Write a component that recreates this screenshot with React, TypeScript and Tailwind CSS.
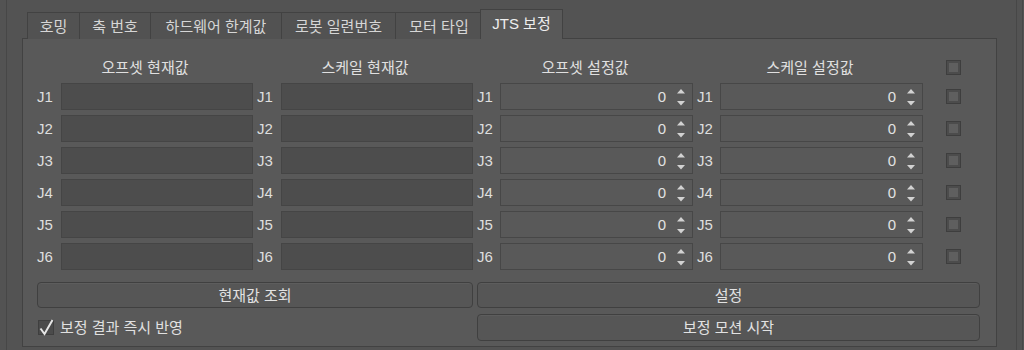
import React from "react";

const tabs = [
  { label: "호밍", w: "w-[53px]" },
  { label: "축 번호", w: "w-[72px]" },
  { label: "하드웨어 한계값", w: "w-[132px]" },
  { label: "로봇 일련번호", w: "w-[115px]" },
  { label: "모터 타입", w: "w-[88px]" },
];

const joints = ["J1", "J2", "J3", "J4", "J5", "J6"];

const SpinArrows = () => (
  <svg width="8" height="27" viewBox="0 0 8 27" className="ml-[11px] mr-[7px] shrink-0">
    <path d="M0 10.5 L4 6 L8 10.5 Z" fill="#d2d2d2" />
    <path d="M0 18 L4 22.5 L8 18 Z" fill="#d2d2d2" />
  </svg>
);

const ReadField = () => (
  <div className="w-[192px] h-[27px] bg-[#4d4d4d] border border-[#454545] shrink-0" />
);

const SpinBox = ({ width }: { width: string }) => (
  <div
    className={`${width} h-[27px] bg-[#595959] border border-[#474747] flex items-center justify-end shrink-0`}
  >
    <span className="text-[#e2e2e2]">0</span>
    <SpinArrows />
  </div>
);

const Check = () => (
  <div className="w-[15px] h-[15px] border border-[#3e3e3e] bg-[#5f5f5f] shadow-[inset_0_0_0_2px_#4c4c4c] shrink-0" />
);

const Label = ({ text, w }: { text: string; w: string }) => (
  <div className={`${w} shrink-0 text-[#dedede]`}>{text}</div>
);

export default function App() {
  return (
    <div className="w-[1024px] h-[350px] bg-[#535353] flex overflow-hidden text-[15px] leading-none font-['Liberation_Sans','Noto_Sans_CJK_KR',sans-serif]">
      <div className="w-[6px] shrink-0" />
      <div className="w-[1011px] shrink-0 border-x border-[#474747] pl-[15px]">
        {/* tab bar */}
        <div className="flex items-end h-[30px] mt-[9px] pl-[5px]">
          {tabs.map((t, i) => (
            <div
              key={t.label}
              className={`${t.w} ${i > 0 ? "-ml-px" : ""} h-[27px] bg-[#525252] border border-b-0 border-[#424242] flex items-center justify-center text-[#d6d6d6]`}
            >
              {t.label}
            </div>
          ))}
          <div className="w-[83px] -ml-[3px] h-[30px] relative z-10 bg-[#595959] border border-b-0 border-[#424242] flex items-center justify-center text-[#eeeeee] pb-[2px]">
            JTS 보정
          </div>
        </div>

        {/* pane */}
        <div className="w-[975px] -mt-px h-[309px] bg-[#595959] border border-[#424242] pt-[16px] pb-[5px] flex flex-col">
          <div className="pl-[14px] flex items-center h-[24px] text-[#e0e0e0]">
            <div className="w-[216px] text-center">오프셋 현재값</div>
            <div className="w-[4px]" />
            <div className="w-[216px] text-center">스케일 현재값</div>
            <div className="w-[4px]" />
            <div className="w-[216px] text-center">오프셋 설정값</div>
            <div className="w-[4px]" />
            <div className="w-[226px] text-center">스케일 설정값</div>
            <div className="w-[23px]" />
            <Check />
          </div>

          <div className="pl-[14px] mt-[4px] flex flex-col gap-[5px]">
            {joints.map((j) => (
              <div key={j} className="flex items-center h-[27px]">
                <Label text={j} w="w-[24px]" />
                <ReadField />
                <div className="w-[4px] shrink-0" />
                <Label text={j} w="w-[24px]" />
                <ReadField />
                <div className="w-[4px] shrink-0" />
                <Label text={j} w="w-[23px]" />
                <SpinBox width="w-[193px]" />
                <div className="w-[4px] shrink-0" />
                <Label text={j} w="w-[23px]" />
                <SpinBox width="w-[203px]" />
                <div className="w-[23px] shrink-0" />
                <Check />
              </div>
            ))}
          </div>

          <div className="px-[14px] mt-[12px] grid grid-cols-[436px_503px] gap-x-[4px] gap-y-[6px] text-[#e2e2e2]">
            <button className="h-[26px] bg-[#565656] border border-[#404040] rounded-[4px] shadow-[inset_0_1px_0_#5d5d5d] flex items-center justify-center">
              현재값 조회
            </button>
            <button className="h-[26px] bg-[#565656] border border-[#404040] rounded-[4px] shadow-[inset_0_1px_0_#5d5d5d] flex items-center justify-center">
              설정
            </button>
            <div className="h-[27px] flex items-center pl-[1px]">
              <div className="relative w-[16px] h-[15px] bg-[#4b4b4b] border border-[#3f3f3f] shrink-0">
                <svg
                  width="16"
                  height="18"
                  viewBox="0 0 16 18"
                  className="absolute -left-px -top-[3px] overflow-visible"
                >
                  <path
                    d="M2.5 10.5 L6.5 16 L14.5 2"
                    fill="none"
                    stroke="#e6e6e6"
                    strokeWidth="2"
                  />
                </svg>
              </div>
              <span className="ml-[6px] text-[#e0e0e0]">보정 결과 즉시 반영</span>
            </div>
            <button className="h-[27px] bg-[#565656] border border-[#404040] rounded-[4px] shadow-[inset_0_1px_0_#5d5d5d] flex items-center justify-center">
              보정 모션 시작
            </button>
          </div>
        </div>
      </div>
      <div className="w-[5px] shrink-0" />
      <div className="w-px shrink-0 bg-[#474747]" />
    </div>
  );
}
